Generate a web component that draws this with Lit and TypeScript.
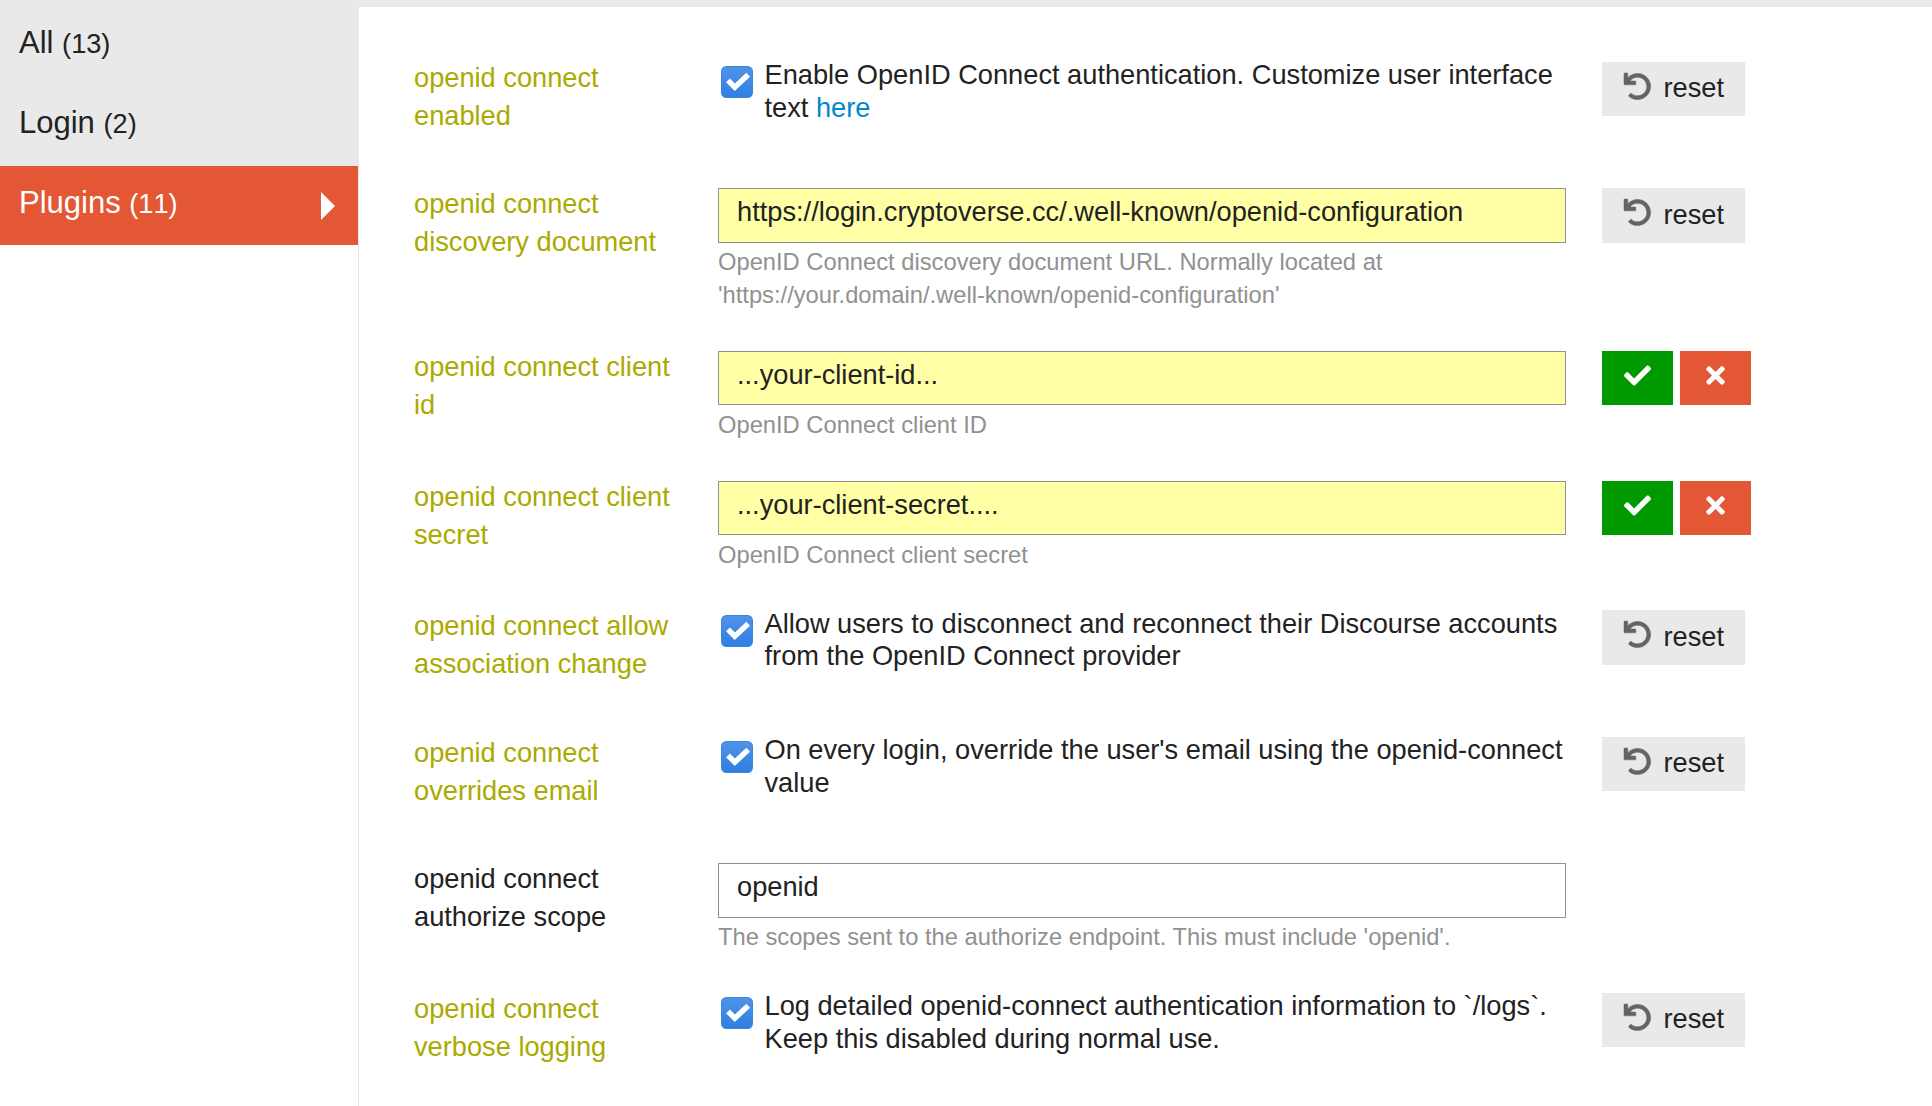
import { LitElement, html, css, svg, nothing } from "lit";
import { customElement } from "lit/decorators.js";

interface Setting {
  name: string;
  height: number;
  kind: "bool" | "text";
  value?: string;
  desc: unknown;
  changed: boolean;
  action: "reset" | "edit" | "none";
}

const settings: Setting[] = [
  { name: "openid connect enabled", height: 126.2, kind: "bool", changed: true, action: "reset",
    desc: html`Enable OpenID Connect authentication. Customize user interface text <a class="link">here</a>` },
  { name: "openid connect discovery document", height: 162.7, kind: "text", changed: true, action: "reset",
    value: "https://login.cryptoverse.cc/.well-known/openid-configuration",
    desc: "OpenID Connect discovery document URL. Normally located at 'https://your.domain/.well-known/openid-configuration'" },
  { name: "openid connect client id", height: 129.8, kind: "text", changed: true, action: "edit",
    value: "...your-client-id...", desc: "OpenID Connect client ID" },
  { name: "openid connect client secret", height: 129.5, kind: "text", changed: true, action: "edit",
    value: "...your-client-secret....", desc: "OpenID Connect client secret" },
  { name: "openid connect allow association change", height: 126.4, kind: "bool", changed: true, action: "reset",
    desc: "Allow users to disconnect and reconnect their Discourse accounts from the OpenID Connect provider" },
  { name: "openid connect overrides email", height: 126.5, kind: "bool", changed: true, action: "reset",
    desc: "On every login, override the user's email using the openid-connect value" },
  { name: "openid connect authorize scope", height: 129.8, kind: "text", changed: false, action: "none",
    value: "openid", desc: "The scopes sent to the authorize endpoint. This must include 'openid'." },
  { name: "openid connect verbose logging", height: 112, kind: "bool", changed: true, action: "reset",
    desc: "Log detailed openid-connect authentication information to `/logs`. Keep this disabled during normal use." },
];

const undoIcon = svg`<path fill="currentColor" stroke="currentColor" stroke-width="10" d="M212.333 224.333H12c-6.627 0-12-5.373-12-12V12C0 5.373 5.373 0 12 0h48c6.627 0 12 5.373 12 12v78.112C117.773 39.279 184.26 7.47 258.175 8.007c136.906.994 246.448 111.623 246.157 248.532C504.041 393.258 393.12 504 256.333 504c-64.089 0-122.496-24.313-166.51-64.215-5.099-4.622-5.334-12.554-.467-17.42l33.967-33.967c4.474-4.474 11.662-4.717 16.401-.525C170.76 415.336 211.58 432 256.333 432c97.268 0 176-78.716 176-176 0-97.267-78.716-176-176-176-58.496 0-110.28 28.476-142.274 72.333h98.274c6.627 0 12 5.373 12 12v48c0 6.627-5.373 12-12 12z"/>`;

@customElement("app-root")
export class AppRoot extends LitElement {
  static styles = css`
    :host { display: block; height: 1106px; overflow: hidden; background: #fff; color: #222;
      font-family: "Liberation Sans", Arial, sans-serif; font-size: 27.22px; }
    * { box-sizing: border-box; }
    .page { display: flex; height: 1106px; border-top: 7px solid #e9e9e9; }
    .nav { width: 359px; border-right: 1px solid #e9e9e9; margin-top: -7px; }
    .item { display: flex; align-items: center; justify-content: space-between; height: 80px;
      padding: 0 23px 0 19px; background: #e9e9e9; font-size: 31px; line-height: 40px; }
    .first { height: 86px; padding-top: 6px; }
    .active { background: #e45735; color: #fff; height: 79px; }
    .title { padding-bottom: 5px; }
    .count { font-size: 27.2px; font-kerning: none; }
    .arrow { width: 14px; height: 28px; margin-top: 1px; }
    .main { flex: 1; padding: 55px 0 0 55px; }
    .row { display: grid; grid-template-columns: 304px 848px auto; align-items: start; }
    .label { margin: -3px 0 0; font-size: 27.22px; font-weight: 400; line-height: 38.2px; width: 265px; }
    .changed .label { color: #aaaa00; }
    .field { height: 54.45px; border: 1px solid #919191; padding: 0 18px; line-height: 46px; white-space: nowrap; }
    .changed .field { background: #ffffa6; }
    .hint { color: #919191; font-size: 23.73px; line-height: 33px; padding-top: 3.4px; }
    .check { display: flex; margin-top: -4px; }
    .box { width: 32px; height: 32px; margin: 8.35px 11.5px 0 3px; flex: none; }
    .text { line-height: 32.8px; padding-top: 1.35px; }
    .link { color: #0088cc; }
    .actions { display: flex; gap: 7px; padding-left: 36px; }
    .btn { display: flex; align-items: center; height: 54.45px; background: #e9e9e9; }
    .reset { width: 143px; padding-left: 22px; gap: 12.5px; }
    .reset span { padding-bottom: 1.5px; }
    .undo { width: 27px; height: 27px; color: #646464; margin-top: -5px; overflow: visible; }
    .ok, .cancel { width: 71px; justify-content: center; color: #fff; }
    .ok { background: #009900; }
    .cancel { background: #e45735; }
    .mark { width: 27px; height: 27px; margin-top: -5px; }
  `;

  private renderActions(s: Setting) {
    if (s.action === "reset") {
      return html`<div class="actions"><div class="btn reset">
        <svg class="undo" viewBox="0 0 512 512">${undoIcon}</svg><span>reset</span></div></div>`;
    }
    if (s.action === "edit") {
      return html`<div class="actions">
        <div class="btn ok"><svg class="mark" viewBox="0 0 512 512"><path fill="currentColor" d="M173.898 439.404l-166.4-166.4c-9.997-9.997-9.997-26.206 0-36.204l36.203-36.204c9.997-9.998 26.207-9.998 36.204 0L192 312.69 432.095 72.596c9.997-9.997 26.207-9.997 36.204 0l36.203 36.204c9.997 9.997 9.997 26.206 0 36.204l-294.4 294.401c-9.998 9.997-26.207 9.997-36.204-.001z"/></svg></div>
        <div class="btn cancel"><svg class="mark" viewBox="-80 0 512 512"><path fill="currentColor" d="M242.72 256l100.07-100.07c12.28-12.28 12.28-32.19 0-44.48l-22.24-22.24c-12.28-12.28-32.19-12.28-44.48 0L176 189.28 75.93 89.21c-12.28-12.28-32.19-12.28-44.48 0L9.21 111.45c-12.28 12.28-12.28 32.19 0 44.48L109.28 256 9.21 356.07c-12.28 12.28-12.28 32.19 0 44.48l22.24 22.24c12.28 12.28 32.2 12.28 44.48 0L176 322.72l100.07 100.07c12.28 12.28 32.2 12.28 44.48 0l22.24-22.24c12.28-12.28 12.28-32.19 0-44.48L242.72 256z"/></svg></div>
      </div>`;
    }
    return nothing;
  }

  private renderValue(s: Setting) {
    if (s.kind === "text") {
      return html`<div><div class="field">${s.value}</div><div class="hint">${s.desc}</div></div>`;
    }
    return html`<div class="check">
      <svg class="box" viewBox="0 0 32 32">
        <defs><linearGradient id="g" x1="0" y1="0" x2="0" y2="1"><stop offset="0" stop-color="#4f93e8"/><stop offset="1" stop-color="#2f7fe3"/></linearGradient></defs>
        <rect width="32" height="32" rx="5.5" fill="#3b84dc"/>
        <rect x="1" y="1" width="30" height="30" rx="4.5" fill="url(#g)"/>
        <path d="M7 14.3 L13.8 21.2 L27.2 8.8" fill="none" stroke="#fff" stroke-width="5.4"/>
      </svg>
      <div class="text">${s.desc}</div></div>`;
  }

  render() {
    return html`<div class="page">
      <nav class="nav">
        <div class="item first"><span class="title">All <span class="count">(13)</span></span></div>
        <div class="item"><span class="title">Login <span class="count">(2)</span></span></div>
        <div class="item active"><span class="title">Plugins <span class="count">(11)</span></span>
          <svg class="arrow" viewBox="0 0 14 28"><path d="M0 0L14 14L0 28Z" fill="#fff"/></svg></div>
      </nav>
      <main class="main">
        ${settings.map((s) => html`<section class="row ${s.changed ? "changed" : ""}" style="height:${s.height}px">
          <h3 class="label">${s.name}</h3>${this.renderValue(s)}${this.renderActions(s)}
        </section>`)}
      </main>
    </div>`;
  }
}
